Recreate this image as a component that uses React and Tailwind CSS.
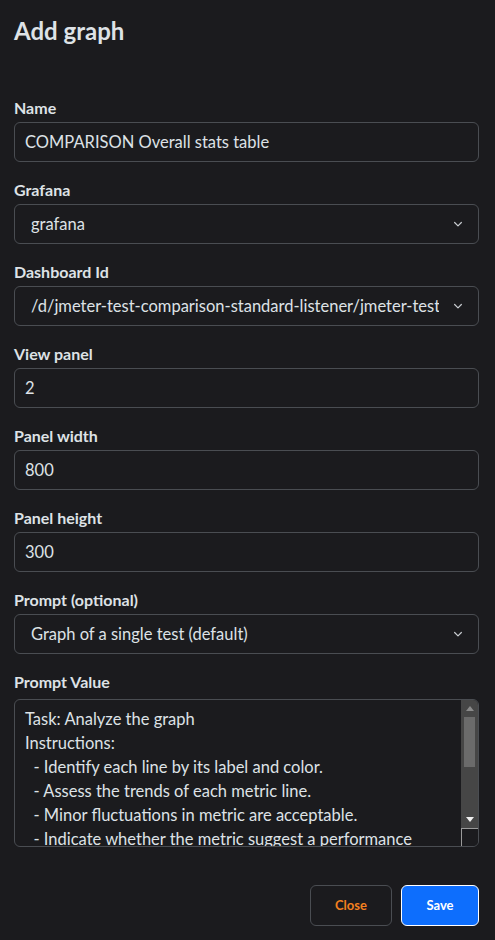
import React from 'react';

const font = { fontFamily: 'Lato, "Noto Sans", sans-serif' };

const Chevron = () => (
  <svg className="h-[12px] w-[12px] text-[#c8ccd0]" viewBox="0 0 16 16" fill="none" stroke="currentColor" strokeWidth="1.6" strokeLinecap="round" strokeLinejoin="round">
    <path d="M3.5 6l4.5 4.5L12.5 6" />
  </svg>
);

const Field = ({ label, children }) => (
  <div className="flex flex-col">
    <label className="mb-[4px] text-[16px] font-bold leading-[20px] text-[#dee2e6]">{label}</label>
    {children}
  </div>
);

const Input = ({ value }) => (
  <div className="flex h-[40px] items-center rounded-[6px] border border-[#4a4d52] px-[10px] text-[16.5px] text-[#dee2e6]">
    {value}
  </div>
);

const Select = ({ value }) => (
  <div className="flex h-[40px] items-center rounded-[6px] border border-[#4a4d52] pl-[16px] pr-[14px] text-[16.5px] text-[#dee2e6]">
    <span className="mr-[13px] min-w-0 flex-1 overflow-hidden whitespace-nowrap">{value}</span>
    <span className="shrink-0"><Chevron /></span>
  </div>
);

const promptLines = [
  'Task: Analyze the graph',
  'Instructions:',
  '  - Identify each line by its label and color.',
  '  - Assess the trends of each metric line.',
  '  - Minor fluctuations in metric are acceptable.',
  '  - Indicate whether the metric suggest a performance',
];

const PromptArea = () => (
  <div className="flex h-[148px] overflow-hidden rounded-[6px] border border-[#4a4d52]">
    <div className="flex-1 overflow-hidden pl-[10px] pt-[7px] text-[16.5px] leading-[24px] text-[#dee2e6]">
      {promptLines.map((l, i) => (
        <div key={i} className="whitespace-pre">{l}</div>
      ))}
    </div>
    <div className="flex w-[17px] flex-col">
      <div className="flex flex-1 flex-col items-center bg-[#464646]">
        <div className="flex h-[17px] items-center justify-center">
          <svg width="8" height="5" viewBox="0 0 8 5"><path d="M0 5L4 0L8 5Z" fill="#8a8a8a" /></svg>
        </div>
        <div className="h-[50px] w-[11px] bg-[#6b6b6b]" />
        <div className="flex-1" />
        <div className="flex h-[17px] items-center justify-center">
          <svg width="8" height="5" viewBox="0 0 8 5"><path d="M0 0L8 0L4 5Z" fill="#f0f0f0" /></svg>
        </div>
      </div>
      <div className="h-[18px] border-l border-t border-[#9a9a9a] bg-[#1b1b1e]" />
    </div>
  </div>
);

export default function App() {
  return (
    <div className="min-h-[940px] bg-[#1b1b1e] pl-[14px] pr-[16px]" style={font}>
      <h5 className="pt-[15px] text-[24px] font-bold leading-[32px] text-[#dee2e6]">Add graph</h5>
      <div className="mt-[51px] flex flex-col gap-[18px]">
        <Field label="Name"><Input value="COMPARISON Overall stats table" /></Field>
        <Field label="Grafana"><Select value="grafana" /></Field>
        <Field label="Dashboard Id"><Select value="/d/jmeter-test-comparison-standard-listener/jmeter-test-comparison" /></Field>
        <Field label="View panel"><Input value="2" /></Field>
        <Field label="Panel width"><Input value="800" /></Field>
        <Field label="Panel height"><Input value="300" /></Field>
        <Field label="Prompt (optional)"><Select value="Graph of a single test (default)" /></Field>
        <div className="flex flex-col">
          <label className="mb-[7px] text-[16px] font-bold leading-[20px] text-[#dee2e6]">Prompt Value</label>
          <PromptArea />
        </div>
      </div>
      <div className="mt-[38px] flex justify-end gap-[9px]">
        <button className="h-[41px] w-[82px] rounded-[6px] border border-[#4a4d52] text-[13px] font-bold text-[#f4801f]">Close</button>
        <button className="h-[41px] w-[78px] rounded-[6px] border border-white bg-[#0d6efd] text-[13px] font-bold text-white">Save</button>
      </div>
    </div>
  );
}
